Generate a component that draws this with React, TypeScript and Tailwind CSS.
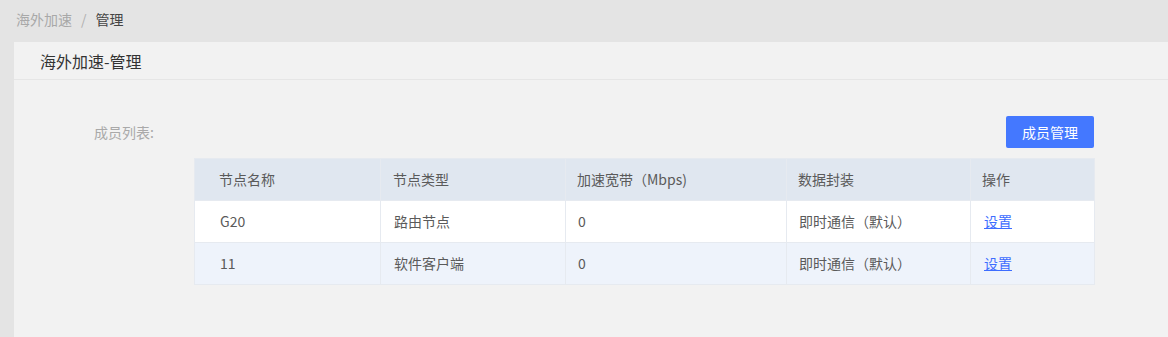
import React from "react";

const rows = [
  { name: "G20", type: "路由节点", bw: "0", enc: "即时通信（默认）" },
  { name: "11", type: "软件客户端", bw: "0", enc: "即时通信（默认）" },
];

export default function App() {
  return (
    <div
      className="min-h-[337px] h-[337px] bg-[#e4e4e4] flex flex-col overflow-hidden"
      style={{ fontFamily: '"Noto Sans CJK SC", "Noto Sans", sans-serif' }}
    >
      <div className="h-[42px] pl-4 pt-[9px] text-[14px] leading-[20px] flex gap-[9px] shrink-0">
        <span className="text-[#a8a8a8]">海外加速</span>
        <span className="text-[#b0b0b0]">/</span>
        <span className="text-[#444]">管理</span>
      </div>
      <div className="ml-[14px] flex-1 bg-[#f2f2f2] flex flex-col">
        <div className="h-[38px] pl-[26px] flex items-center border-b border-[#e6e6e6] text-[16px] text-[#333]">
          海外加速-管理
        </div>
        <div className="pl-[80px] pr-[74px] pt-[36px]">
          <div className="flex justify-between items-center h-[32px]">
            <span className="text-[14px] text-[#a9a9a9]">成员列表:</span>
            <button className="w-[88px] h-[32px] rounded-[2px] bg-[#4478ff] text-white text-[14px]">
              成员管理
            </button>
          </div>
          <div className="ml-[100px] mt-[10px]">
            <table className="w-[900px] table-fixed border-collapse text-[14px] text-[#5a5a5a]">
              <colgroup>
                <col className="w-[186px]" />
                <col className="w-[185px]" />
                <col className="w-[221px]" />
                <col className="w-[184px]" />
                <col className="w-[124px]" />
              </colgroup>
              <thead>
                <tr className="h-[42px] bg-[#e0e7f0]">
                  <th className="border border-[#e6eaf0] font-normal text-left pl-[24px]">节点名称</th>
                  <th className="border border-[#e6eaf0] font-normal text-left pl-[12px]">节点类型</th>
                  <th className="border border-[#e6eaf0] font-normal text-left pl-[11px]">加速宽带（Mbps)</th>
                  <th className="border border-[#e6eaf0] font-normal text-left pl-[11px]">数据封装</th>
                  <th className="border border-[#e6eaf0] font-normal text-left pl-[11px]">操作</th>
                </tr>
              </thead>
              <tbody>
                {rows.map((r, i) => (
                  <tr key={i} className={i % 2 === 0 ? "h-[42px] bg-white" : "h-[42px] bg-[#eef3fb]"}>
                    <td className="border border-[#e6eaf0] pl-[25px]">{r.name}</td>
                    <td className="border border-[#e6eaf0] pl-[13px]">{r.type}</td>
                    <td className="border border-[#e6eaf0] pl-[12px]">{r.bw}</td>
                    <td className="border border-[#e6eaf0] pl-[12px]">{r.enc}</td>
                    <td className="border border-[#e6eaf0] pl-[13px]">
                      <a className="text-[#3d6dff] underline cursor-pointer">设置</a>
                    </td>
                  </tr>
                ))}
              </tbody>
            </table>
          </div>
        </div>
      </div>
    </div>
  );
}
